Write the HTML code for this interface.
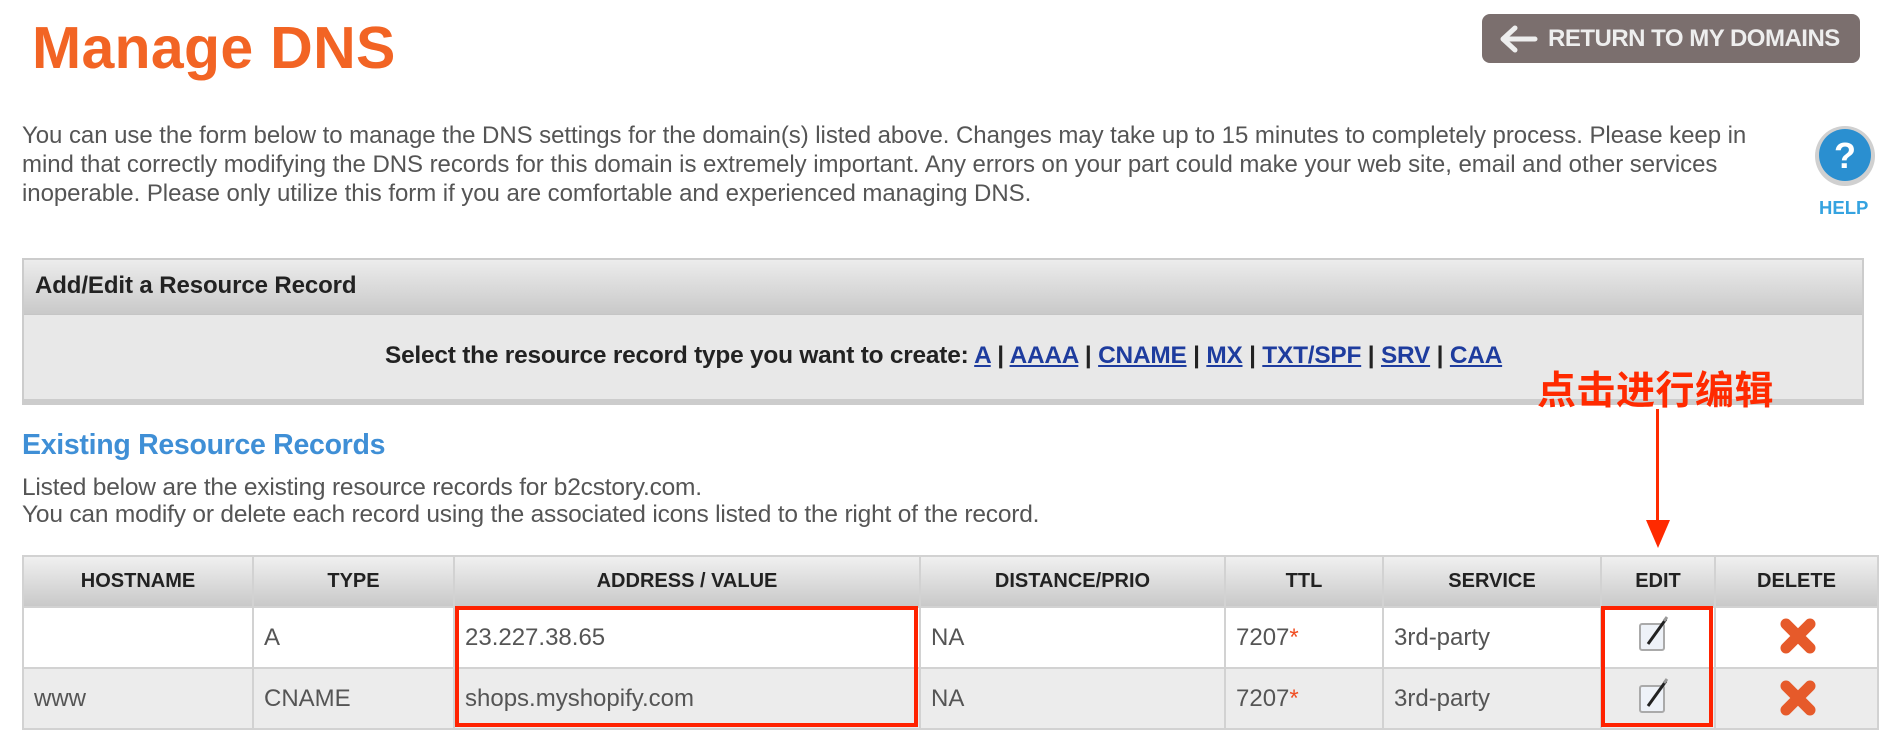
<!DOCTYPE html>
<html><head><meta charset="utf-8"><style>
*{margin:0;padding:0;box-sizing:border-box}
body{width:1900px;height:751px;background:#fff;font-family:"Liberation Sans",Arial,sans-serif;position:relative;overflow:hidden;color:#555}
.abs{position:absolute}
h1{position:absolute;left:32px;top:14px;font-size:59px;font-weight:bold;color:#f26424;letter-spacing:0.3px}
.btn{left:1482px;top:14px;width:378px;height:49px;background:#7b6f6e;border-radius:8px;color:#eee;font-weight:bold;font-size:24px;line-height:49px;padding-left:66px;letter-spacing:-0.5px;white-space:nowrap}
.p{left:22px;top:121px;width:1768px;font-size:24px;line-height:29px;color:#555;letter-spacing:-0.05px}
.box{left:22px;top:258px;width:1842px;height:147px;background:#e8e8e8;border:2px solid #ccc;border-bottom:6px solid #ccc}
.boxh{height:55px;background:linear-gradient(#ececec,#c9c9c9);border-bottom:1px solid #c5c5c5;font-weight:bold;font-size:24px;color:#222;padding:12px 0 0 11px;letter-spacing:-0.1px}
.sel{left:385px;top:342px;font-weight:bold;font-size:24.4px;color:#222;white-space:nowrap;letter-spacing:-0.2px}
.sel a{color:#1e3c9e;text-decoration:underline}
.cn{left:1537px;top:360px;font-size:39px;font-weight:bold;color:#ff2a00;font-family:"Liberation Sans","Noto Sans CJK SC",sans-serif;letter-spacing:0.5px}
h2{position:absolute;left:22px;top:429px;font-size:28.5px;font-weight:bold;color:#3f8fd6;letter-spacing:-0.3px}
.l{left:22px;font-size:24.5px;color:#555;letter-spacing:-0.2px}
table{position:absolute;left:22px;top:555px;width:1857px;border-collapse:collapse;font-size:24px;color:#555}
td,th{border:2px solid #d2d2d2;padding-left:10px;text-align:left}
th{height:51px;background:linear-gradient(#f0f0f0,#c9c9c9);color:#222;font-size:20px;text-align:center;padding:0}
tr.r1 td{height:61px;background:#fff}
tr.r2 td{height:61px;background:#ececec}
.red{border:4px solid #ff2200;position:absolute}
.star{color:#f04e23}
</style></head><body>
<h1>Manage DNS</h1>
<div class="abs btn">RETURN TO MY DOMAINS</div>
<svg class="abs" style="left:1497px;top:22px" width="44" height="34" viewBox="0 0 44 34"><path d="M38 17H8M18 6 6 17l12 11" stroke="#eee" stroke-width="5" fill="none" stroke-linecap="round" stroke-linejoin="round"/></svg>
<div class="abs p">You can use the form below to manage the DNS settings for the domain(s) listed above. Changes may take up to 15 minutes to completely process. Please keep in mind that correctly modifying the DNS records for this domain is extremely important. Any errors on your part could make your web site, email and other services inoperable. Please only utilize this form if you are comfortable and experienced managing DNS.</div>
<svg class="abs" style="left:1813px;top:125px" width="64" height="64" viewBox="0 0 64 64"><circle cx="32" cy="31" r="30" fill="#d0d0d0"/><circle cx="32" cy="30" r="26" fill="#2a8fd0"/><text x="32" y="43" font-size="36" font-weight="bold" fill="#fff" text-anchor="middle" font-family="Liberation Sans">?</text></svg>
<div class="abs" style="left:1819px;top:197px;font-weight:bold;font-size:18.5px;color:#35a3e0">HELP</div>
<div class="abs box"><div class="boxh">Add/Edit a Resource Record</div></div>
<div class="abs sel">Select the resource record type you want to create: <a>A</a> | <a>AAAA</a> | <a>CNAME</a> | <a>MX</a> | <a>TXT/SPF</a> | <a>SRV</a> | <a>CAA</a></div>
<div class="abs cn">点击进行编辑</div>
<div class="abs" style="left:1656px;top:409px;width:3px;height:118px;background:#ff2a00"></div>
<svg class="abs" style="left:1646px;top:520px" width="24" height="28"><path d="M0 0h24L12 28z" fill="#ff2a00"/></svg>
<h2>Existing Resource Records</h2>
<div class="abs l" style="top:474px">Listed below are the existing resource records for b2cstory.com.</div>
<div class="abs l" style="top:501px">You can modify or delete each record using the associated icons listed to the right of the record.</div>
<table>
<tr><th style="width:230px">HOSTNAME</th><th style="width:201px">TYPE</th><th style="width:466px">ADDRESS / VALUE</th><th style="width:305px">DISTANCE/PRIO</th><th style="width:158px">TTL</th><th style="width:218px">SERVICE</th><th style="width:114px">EDIT</th><th>DELETE</th></tr>
<tr class="r1"><td></td><td>A</td><td>23.227.38.65</td><td>NA</td><td>7207<span class="star">*</span></td><td>3rd-party</td><td></td><td></td></tr>
<tr class="r2"><td>www</td><td>CNAME</td><td>shops.myshopify.com</td><td>NA</td><td>7207<span class="star">*</span></td><td>3rd-party</td><td></td><td></td></tr>
</table>
<div class="red" style="left:455px;top:606px;width:463px;height:121px"></div>
<div class="red" style="left:1601px;top:606px;width:112px;height:121px"></div>
<svg class="abs" style="left:1636px;top:614px" width="40" height="40" viewBox="0 0 40 40"><rect x="4" y="10" width="24" height="26" rx="2" fill="#eef2f8" stroke="#aaa" stroke-width="2"/><path d="M12 30 30 5" stroke="#222" stroke-width="3"/><path d="M28 7l3-4" stroke="#999" stroke-width="3"/></svg>
<svg class="abs" style="left:1636px;top:676px" width="40" height="40" viewBox="0 0 40 40"><rect x="4" y="10" width="24" height="26" rx="2" fill="#eef2f8" stroke="#aaa" stroke-width="2"/><path d="M12 30 30 5" stroke="#222" stroke-width="3"/><path d="M28 7l3-4" stroke="#999" stroke-width="3"/></svg>
<svg class="abs" style="left:1778px;top:616px" width="40" height="40" viewBox="0 0 40 40"><path d="M8 8 32 32M32 8 8 32" stroke="#e65a2a" stroke-width="11" stroke-linecap="round"/></svg>
<svg class="abs" style="left:1778px;top:678px" width="40" height="40" viewBox="0 0 40 40"><path d="M8 8 32 32M32 8 8 32" stroke="#e65a2a" stroke-width="11" stroke-linecap="round"/></svg>
</body></html>
